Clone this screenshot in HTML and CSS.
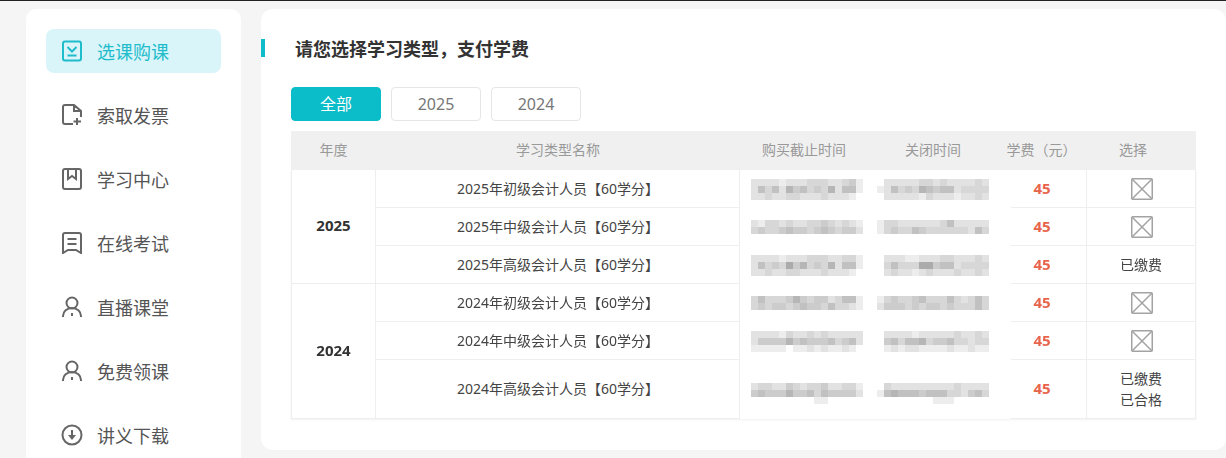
FILE: index.html
```html
<!DOCTYPE html>
<html lang="zh-CN">
<head>
    <meta charset="UTF-8">
    <title>选课购课</title>
    <link rel="stylesheet" href="styles.css">
</head>
<body>
    <div class="page">
        <div class="sidebar">
            <a class="menu-item active">
                <svg class="menu-icon" viewBox="0 0 22 22"><rect x="2" y="1.500" width="18" height="19" rx="2"/><path d="M6.500 7l4.500 4.500L15.500 7M6.500 15.500h9"/></svg>
                <span>选课购课</span>
            </a>
            <a class="menu-item">
                <svg class="menu-icon" viewBox="0 0 22 22"><path d="M12 20H4a2 2 0 0 1-2-2V3a2 2 0 0 1 2-2h9l7 6v6M13 1v6h7M16 14v7M12.500 17.500h7.500"/></svg>
                <span>索取发票</span>
            </a>
            <a class="menu-item">
                <svg class="menu-icon" viewBox="0 0 22 22"><rect x="2" y="1" width="18" height="20" rx="2"/><path d="M7 1v10l4-3 4 3V1"/></svg>
                <span>学习中心</span>
            </a>
            <a class="menu-item">
                <svg class="menu-icon" viewBox="0 0 22 22"><path d="M4 1h14a2 2 0 0 1 2 2v18l-5-3H7l-5 3V3a2 2 0 0 1 2-2zM6.500 7h9M6.500 12h9"/></svg>
                <span>在线考试</span>
            </a>
            <a class="menu-item">
                <svg class="menu-icon" viewBox="0 0 22 22"><circle cx="11" cy="7" r="5.500"/><path d="M2 21v-1a9 8 0 0 1 18 0v1M11 17v3"/></svg>
                <span>直播课堂</span>
            </a>
            <a class="menu-item">
                <svg class="menu-icon" viewBox="0 0 22 22"><circle cx="11" cy="7" r="5.500"/><path d="M2 21v-1a9 8 0 0 1 18 0v1M11 17v3"/></svg>
                <span>免费领课</span>
            </a>
            <a class="menu-item">
                <svg class="menu-icon" viewBox="0 0 22 22"><circle cx="11" cy="11" r="9.500"/><path d="M11 6v6"/><path class="solid" d="M7 11h8l-4 5z"/></svg>
                <span>讲义下载</span>
            </a>
        </div>

        <div class="main">
            <h2 class="title">请您选择学习类型，支付学费</h2>

            <div class="tabs">
                <div class="tab selected">全部</div>
                <div class="tab">2025</div>
                <div class="tab">2024</div>
            </div>

            <div class="table-head">
                <div>年度</div>
                <div>学习类型名称</div>
                <div>购买截止时间</div>
                <div>关闭时间</div>
                <div class="head-fee">学费（元）</div>
                <div>选择</div>
            </div>

            <table class="course-table">
                <colgroup>
                    <col class="col-year">
                    <col class="col-name">
                    <col class="col-buy">
                    <col class="col-close">
                    <col class="col-fee">
                    <col class="col-pick">
                </colgroup>
                <tbody>
                    <tr>
                        <td class="year" rowspan="3">2025</td>
                        <td class="name">2025年初级会计人员【60学分】</td>
                        <td class="time"><canvas class="mosaic" width="112" height="21" data-px="2222122233322341 2535264534362551 2232233222322210"></canvas></td>
                        <td class="time time-close"><canvas class="mosaic" width="112" height="21" data-px="0222223323222232 1253436545523333 0222221322212232"></canvas></td>
                        <td class="fee">45</td>
                        <td class="pick"><svg class="no-img" viewBox="0 0 22 22"><rect x="0.750" y="0.750" width="20.500" height="20.500" rx="1"/><path d="M1 1l20 20M21 1L1 21"/></svg></td>
                    </tr>
                    <tr>
                        <td class="name">2025年中级会计人员【60学分】</td>
                        <td class="time"><canvas class="mosaic" width="112" height="14" data-px="2133232233432321 3433454434543442"></canvas></td>
                        <td class="time time-close"><canvas class="mosaic" width="112" height="14" data-px="1332222223522222 1343354333333253"></canvas></td>
                        <td class="fee">45</td>
                        <td class="pick"><svg class="no-img" viewBox="0 0 22 22"><rect x="0.750" y="0.750" width="20.500" height="20.500" rx="1"/><path d="M1 1l20 20M21 1L1 21"/></svg></td>
                    </tr>
                    <tr>
                        <td class="name">2025年高级会计人员【60学分】</td>
                        <td class="time"><canvas class="mosaic" width="112" height="21" data-px="2222122233322331 2534374634362551 2232233222322210"></canvas></td>
                        <td class="time time-close"><canvas class="mosaic" width="112" height="21" data-px="0222112223322232 0353337745523333 0232212322232232"></canvas></td>
                        <td class="fee">45</td>
                        <td class="pick">已缴费</td>
                    </tr>
                    <tr>
                        <td class="year" rowspan="3">2024</td>
                        <td class="name">2024年初级会计人员【60学分】</td>
                        <td class="time"><canvas class="mosaic" width="112" height="14" data-px="3533346434423551 3434434544353321"></canvas></td>
                        <td class="time time-close"><canvas class="mosaic" width="112" height="14" data-px="1343345333532353 2444343443433353"></canvas></td>
                        <td class="fee">45</td>
                        <td class="pick"><svg class="no-img" viewBox="0 0 22 22"><rect x="0.750" y="0.750" width="20.500" height="20.500" rx="1"/><path d="M1 1l20 20M21 1L1 21"/></svg></td>
                    </tr>
                    <tr>
                        <td class="name">2024年中级会计人员【60学分】</td>
                        <td class="time"><canvas class="mosaic" width="112" height="21" data-px="2222132232322222 2444464544453452 1111101121211210"></canvas></td>
                        <td class="time time-close"><canvas class="mosaic" width="112" height="21" data-px="0222212222232232 0453556344533233 0121221111211211"></canvas></td>
                        <td class="fee">45</td>
                        <td class="pick"><svg class="no-img" viewBox="0 0 22 22"><rect x="0.750" y="0.750" width="20.500" height="20.500" rx="1"/><path d="M1 1l20 20M21 1L1 21"/></svg></td>
                    </tr>
                    <tr class="tall">
                        <td class="name">2024年高级会计人员【60学分】</td>
                        <td class="time"><canvas class="mosaic" width="112" height="28" data-px="0000000000000000 2332243233422331 4544464453544442 0000000001100000"></canvas></td>
                        <td class="time time-close"><canvas class="mosaic" width="112" height="28" data-px="0000000000000000 0322222222232222 1565554555332453 0000000011100000"></canvas></td>
                        <td class="fee">45</td>
                        <td class="pick">已缴费<br>已合格</td>
                    </tr>
                </tbody>
            </table>
        </div>
    </div>

    <script src="mosaic.js"></script>
</body>
</html>
```

FILE: styles.css
```css
* {
    margin: 0;
    padding: 0;
    box-sizing: border-box;
}

html, body {
    height: 100%;
    overflow: hidden;
}

body {
    font-family: "Noto Sans", "Noto Sans CJK SC", sans-serif;
    background: #f5f5f5;
    color: #333;
}

.page {
    display: flex;
    align-items: flex-start;
    gap: 20px;
    height: 458px;
    overflow: hidden;
    padding: 8px 0 0 26px;
    border-top: 1px solid #222;
}

.sidebar {
    flex: none;
    width: 215px;
    height: 520px;
    padding: 20px;
    background: #fff;
    border-radius: 10px;
}

.menu-item {
    display: flex;
    align-items: center;
    gap: 14px;
    height: 44px;
    padding-left: 15px;
    margin-bottom: 20px;
    font-size: 18px;
    color: #555;
    border-radius: 8px;
}

.menu-item.active {
    background: #d9f5fa;
    color: #1fbccb;
}

.menu-icon {
    width: 22px;
    height: 22px;
    fill: none;
    stroke: #666;
    stroke-width: 2;
}

.menu-icon .solid {
    fill: #666;
    stroke: none;
}

.active .menu-icon {
    stroke: #1fbccb;
}

.main {
    flex: none;
    width: 965px;
    height: 441px;
    padding: 30px 30px 0;
    background: #fff;
    border-radius: 12px;
}

.title {
    height: 18px;
    margin-left: -30px;
    padding-left: 30px;
    border-left: 4px solid #0fbcc9;
    font-size: 18px;
    line-height: 20px;
    font-weight: bold;
    color: #333;
}

.tabs {
    display: flex;
    gap: 10px;
    margin-top: 30px;
}

.tab {
    width: 90px;
    height: 34px;
    line-height: 32px;
    text-align: center;
    font-size: 16px;
    color: #777;
    border: 1px solid #e6e6e6;
    border-radius: 4px;
}

.tab.selected {
    background: #0bbcc9;
    border-color: #0bbcc9;
    color: #fff;
}

.table-head {
    display: grid;
    grid-template-columns: 85px 364px 128px 130px 80px 110px;
    height: 39px;
    margin-top: 10px;
    background: #f0f0f0;
    font-size: 14px;
    line-height: 38px;
    text-align: center;
    color: #999;
}

.head-fee {
    padding-left: 7px;
    white-space: nowrap;
}

.course-table {
    width: 905px;
    table-layout: fixed;
    border-collapse: separate;
    border-spacing: 0;
    box-shadow: 0 1px 2px rgba(0,0,0,0.06);
    font-size: 14px;
    text-align: center;
    color: #444;
}

.col-year { width: 85px; }
.col-name { width: 364px; }
.col-buy { width: 133px; }
.col-close { width: 138px; }
.col-fee { width: 75px; }
.col-pick { width: 110px; }

.course-table td {
    height: 38px;
    border-bottom: 1px solid #eee;
    vertical-align: middle;
}

.course-table .tall td {
    height: 59px;
}

.year {
    font-size: 15px;
    font-weight: bold;
    padding-bottom: 3px;
    border-left: 1px solid #eee;
    border-right: 1px solid #eee;
    color: #333;
}

.name {
    padding: 0 0 2px 1px;
    border-right: 1px solid #eee;
}

.course-table .time {
    border-bottom: none;
}

.time-close {
    padding-right: 18px;
}

.mosaic {
    display: block;
    margin: 0 auto;
}

.fee {
    padding: 0 13px 2px 0;
    font-size: 15px;
    font-weight: bold;
    color: #e8654c;
}

.pick {
    line-height: 21px;
    border-left: 1px solid #eee;
    border-right: 1px solid #eee;
}

.no-img {
    display: block;
    width: 22px;
    height: 22px;
    margin-left: 44px;
    fill: none;
    stroke: #a3a3a3;
    stroke-width: 1.5;
}
```

FILE: mosaic.js
```js
// Paint the blurred date cells from their data-px rows (0 = white, 9 = darkest)
document.querySelectorAll('.mosaic').forEach(function (canvas) {
    const ctx = canvas.getContext('2d');
    canvas.dataset.px.split(' ').forEach(function (row, y) {
        row.split('').forEach(function (level, x) {
            const grey = level === '0' ? 255 : 248 - Number(level) * 11;
            ctx.fillStyle = `rgb(${grey}, ${grey}, ${grey})`;
            ctx.fillRect(x * 7, y * 7, 7, 7);
        });
    });
});
```
